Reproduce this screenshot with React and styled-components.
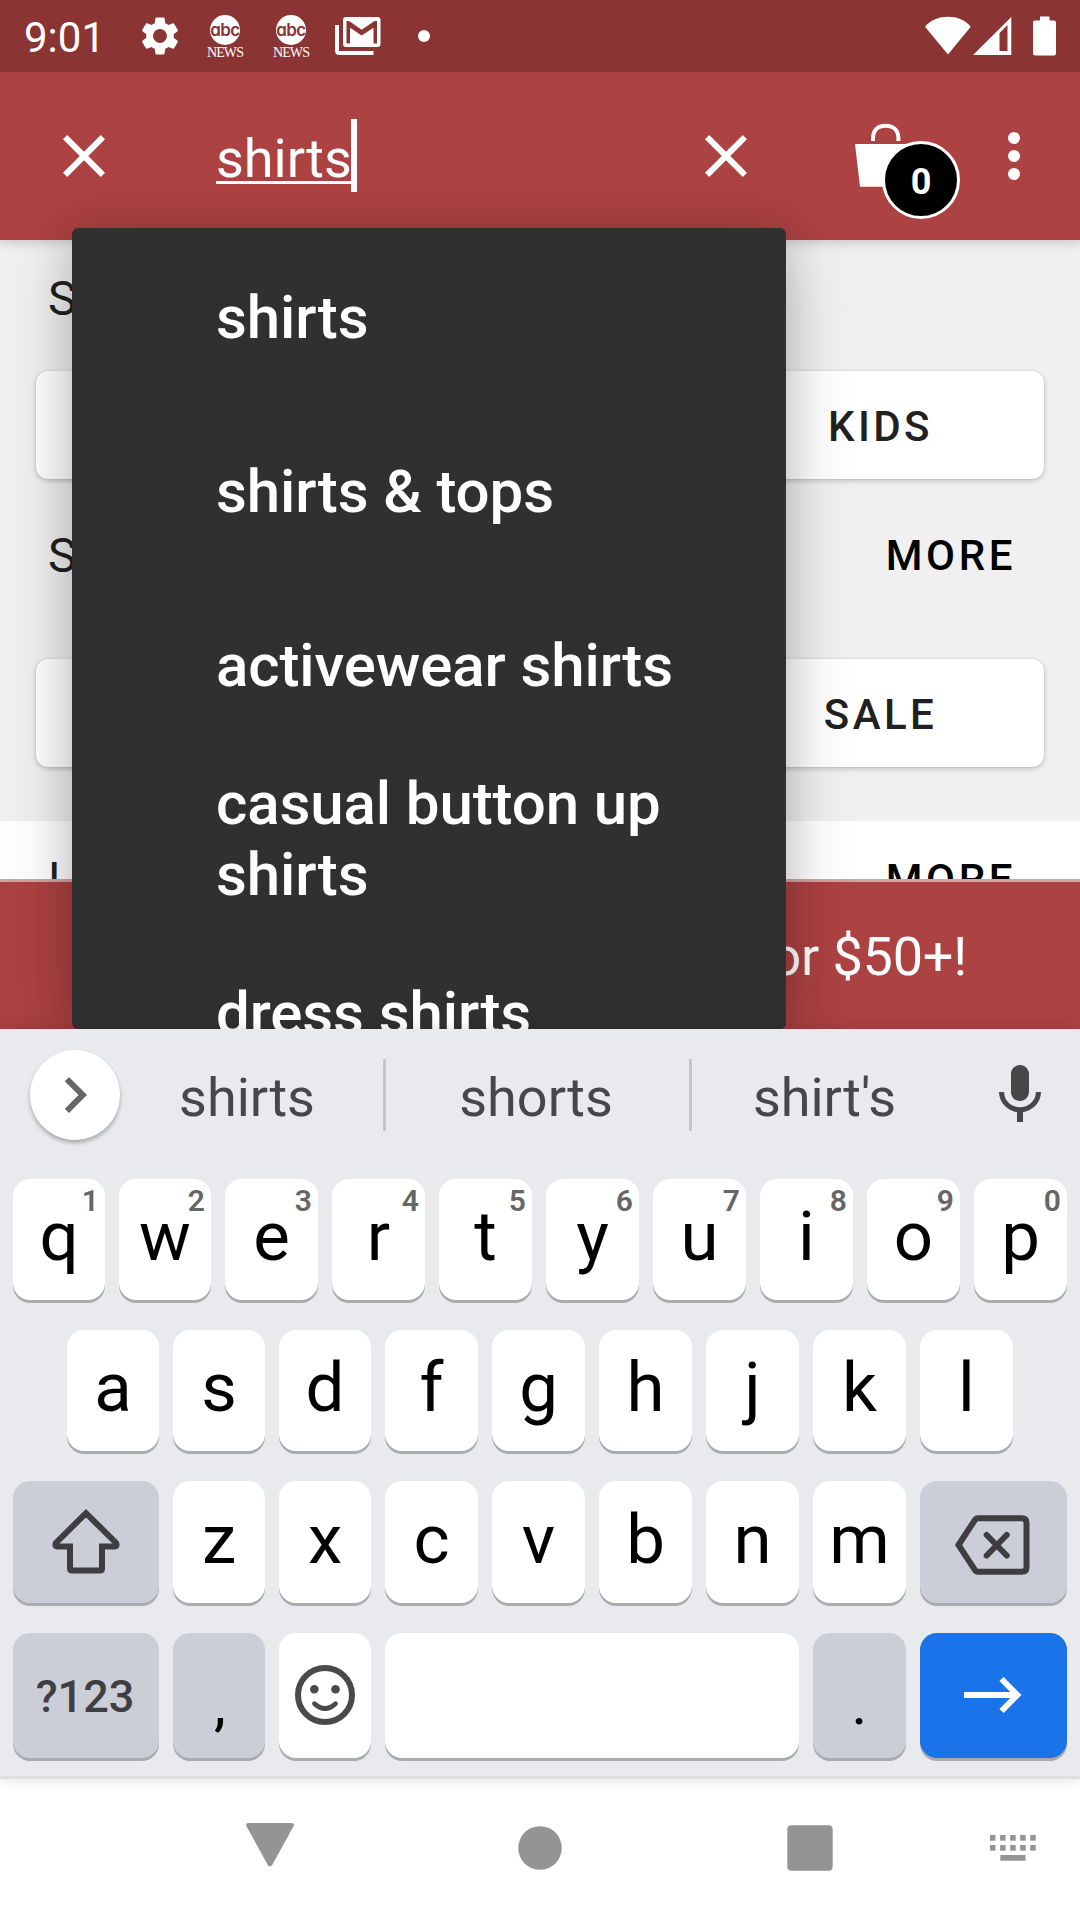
import React from 'react';
import styled, { createGlobalStyle, css } from 'styled-components';
import { MdSettings } from 'react-icons/md';

const GlobalStyle = createGlobalStyle`
  *, *::before, *::after { box-sizing: border-box; }
  body { margin: 0; background: #fff; font-family: Roboto, "Liberation Sans", sans-serif; }
`;

const Screen = styled.main`
  display: flex;
  flex-direction: column;
  width: 1080px;
  height: 1920px;
  overflow: hidden;
`;

/* ---------- status bar ---------- */

const StatusBar = styled.header`
  display: flex;
  align-items: center;
  height: 72px;
  flex: none;
  padding: 0 24px;
  background: #8a3434;
  color: #fff;
`;

const Clock = styled.div`
  width: 103px;
  padding-top: 4px;
  font-size: 42px;
  line-height: 48px;
  white-space: nowrap;
`;

const Slot = styled.div`
  display: flex;
  flex-direction: column;
  align-items: center;
  justify-content: center;
  width: 66px;
  height: 72px;
`;

const NewsBadge = styled(Slot)`
  justify-content: flex-start;
  padding: 15px 2px 0 0;
`;

const NewsDisc = styled.div`
  display: flex;
  align-items: center;
  justify-content: center;
  width: 30px;
  height: 30px;
  border-radius: 50%;
  background: #fff;
  color: #8a3434;
  font: 600 17px/20px Inter, sans-serif;
  letter-spacing: -0.6px;
  font-feature-settings: "cv11";
`;

const NewsWord = styled.div`
  margin-top: 1px;
  font: 14px/14px "Liberation Serif", serif;
  letter-spacing: -0.9px;
`;

const Dot = styled.div`
  width: 12px;
  height: 12px;
  border-radius: 50%;
  background: #fff;
`;

const SystemIcons = styled.div`
  display: flex;
  margin-left: auto;
`;

const WifiSlot = styled.div`
  display: flex;
  margin-right: 2px;
`;

const BatterySlot = styled.div`
  display: flex;
  margin-left: 21px;
`;

/* ---------- app ---------- */

const AppArea = styled.section`
  position: relative;
  display: flex;
  flex-direction: column;
  flex: none;
  height: 957px;
  overflow: hidden;
`;

const AppBar = styled.div`
  position: relative;
  z-index: 1;
  display: flex;
  align-items: center;
  flex: none;
  height: 168px;
  padding: 0 30px 0 48px;
  background: #ad4242;
  color: #fff;
  box-shadow: 0 2px 12px rgba(0, 0, 0, 0.2);
`;

const SearchField = styled.div`
  display: flex;
  align-items: center;
  flex: none;
  width: 474px;
  margin-left: 96px;
`;

const Query = styled.span`
  padding-top: 5px;
  font-size: 54px;
  line-height: 64px;
  text-decoration: underline;
  text-decoration-thickness: 3px;
  text-underline-offset: 4px;
  text-decoration-skip-ink: none;
`;

const Caret = styled.span`
  width: 6px;
  height: 73px;
  margin: 0 0 1px -1px;
  background: #fff;
`;

const Cart = styled.div`
  position: relative;
  width: 105px;
  height: 96px;
  margin-left: 93px;
  padding-top: 12px;
`;

const CartCount = styled.span`
  position: absolute;
  left: 27px;
  top: 33px;
  display: flex;
  align-items: center;
  justify-content: center;
  width: 78px;
  height: 78px;
  padding-top: 3px;
  border: 3px solid #fff;
  border-radius: 50%;
  background: #000;
  font-size: 36px;
  font-weight: 700;
  line-height: 42px;
`;

const Overflow = styled.div`
  margin-left: auto;
  display: flex;
`;

const Content = styled.div`
  flex: none;
  height: 639px;
  overflow: hidden;
  background: #f0f0f0;
`;

const SectionHead = styled.div`
  display: flex;
  align-items: center;
  justify-content: space-between;
  height: 117px;
  padding: 0 64px 0 48px;
  background: ${(p) => (p.$plain ? '#fff' : 'transparent')};
`;

const SectionTitle = styled.div`
  color: #212121;
  font-size: 48px;
  line-height: 56px;
`;

const More = styled.div`
  padding-top: 1px;
  color: #000;
  font-size: 42px;
  font-weight: 500;
  line-height: 48px;
  letter-spacing: 3.6px;
`;

const CardRow = styled.div`
  display: grid;
  grid-template-columns: repeat(3, 1fr);
  gap: 18px;
  padding: 0 36px;
  margin: ${(p) => p.$margin};
`;

const CardButton = styled.div`
  display: flex;
  align-items: center;
  justify-content: center;
  height: 108px;
  padding: 2px 3px 0 0;
  border-radius: 12px;
  background: #fff;
  color: #212121;
  font-size: 42px;
  font-weight: 500;
  letter-spacing: 3.4px;
  box-shadow: 0 2px 5px rgba(0, 0, 0, 0.2), 0 0 2px rgba(0, 0, 0, 0.12);
`;

const Promo = styled.div`
  display: flex;
  align-items: center;
  justify-content: flex-end;
  flex: none;
  height: 150px;
  padding: 1px 113px 0 0;
  border-top: 3px solid #d8a1a1;
  background: #ad4242;
  color: #fff;
  font-size: 54px;
  letter-spacing: -0.2px;
`;

const Popup = styled.ul`
  position: absolute;
  z-index: 2;
  left: 72px;
  top: 156px;
  width: 714px;
  height: 801px;
  margin: 0;
  padding: 2px 0 0;
  list-style: none;
  overflow: hidden;
  border-radius: 6px;
  background: #303030;
  box-shadow: 0 20px 72px rgba(0, 0, 0, 0.2), 0 4px 40px rgba(0, 0, 0, 0.14);
`;

const Suggestion = styled.li`
  display: flex;
  align-items: center;
  height: 174px;
  padding: 0 96px 0 144px;
  color: #fff;
  font-size: 60px;
  font-weight: 500;
  line-height: 71px;
  letter-spacing: -0.1px;
`;

/* ---------- keyboard ---------- */

const Keyboard = styled.section`
  position: relative;
  z-index: 3;
  flex: none;
  height: 750px;
  background: #e8eaed;
  border-bottom: 3px solid #e0e0e0;
  box-shadow: 0 0 14px rgba(0, 0, 0, 0.14);
`;

const WordStrip = styled.div`
  display: flex;
  align-items: center;
  height: 132px;
  margin-bottom: 18px;
  padding: 0 24px 0 30px;
`;

const ExpandButton = styled.div`
  display: flex;
  align-items: center;
  justify-content: center;
  flex: none;
  width: 90px;
  height: 90px;
  border-radius: 50%;
  background: #fff;
  box-shadow: 0 3px 4px rgba(0, 0, 0, 0.28);
`;

const Word = styled.div`
  flex: none;
  width: ${(p) => p.$w}px;
  padding-top: 5px;
  padding-right: ${(p) => p.$trim || 0}px;
  color: #464749;
  font-size: 54px;
  line-height: 64px;
  text-align: center;
  margin-left: ${(p) => p.$gap || 0}px;
`;

const Divider = styled.div`
  width: 3px;
  height: 72px;
  background: #c4c6ca;
`;

const MicSlot = styled.div`
  display: flex;
  margin-left: auto;
`;

const KeyRow = styled.div`
  display: flex;
  gap: 14px;
  height: ${(p) => p.$h}px;
  margin-bottom: ${(p) => p.$after}px;
  padding: 0 ${(p) => p.$inset || 13}px;
`;

const tones = {
  light: css`background: #fff; color: #000;`,
  grey: css`background: #cbced6; color: #000;`,
  blue: css`background: #1a73e8; color: #fff;`,
};

const Key = styled.div`
  position: relative;
  display: flex;
  align-items: center;
  justify-content: center;
  flex: ${(p) => (p.$w ? `0 0 ${p.$w}px` : '1 1 0')};
  min-width: 0;
  padding-bottom: ${(p) => p.$lift ?? 6}px;
  border-radius: 17px;
  box-shadow: 0 3px 0 #a9abae;
  font-size: 69px;
  line-height: 80px;
  ${(p) => tones[p.$tone || 'light']}
`;

const IconKey = styled(Key)`
  padding: ${(p) => p.$pad || '0'};
`;

const ModeKey = styled(Key)`
  padding: 2px 2px 0 0;
  color: #3e3f42;
  font-size: 45px;
  font-weight: 500;
`;

const PunctuationKey = styled(Key)`
  padding: 17px 0 0 ${(p) => p.$nudge || 0}px;
  font-size: 60px;
`;

const Hint = styled.span`
  position: absolute;
  top: 7px;
  right: 6px;
  color: #666;
  font-size: 30px;
  font-weight: 600;
  line-height: 30px;
`;

/* ---------- navigation bar ---------- */

const NavBar = styled.nav`
  display: grid;
  grid-template-columns: 405px 270px 270px 135px;
  flex: none;
  height: 141px;
  background: #fff;
`;

const NavItem = styled.div`
  display: flex;
  align-items: center;
  padding-bottom: ${(p) => p.$lift ?? 3}px;
  padding-left: ${(p) => p.$x}px;
`;

/* ---------- drawings ---------- */

const Close = () => (
  <svg width="72" height="72" viewBox="0 0 24 24" fill="#fff">
    <path d="M19 6.41 17.59 5 12 10.59 6.41 5 5 6.41 10.59 12 5 17.59 6.41 19 12 13.41 17.59 19 19 17.59 13.41 12z" />
  </svg>
);

const MailStack = () => (
  <svg width="46" height="38" viewBox="0 0 46 38">
    <path d="M2 8v25.500q0 2.500 2.500 2.500h34" fill="none" stroke="#fff" strokeWidth="4" />
    <rect x="8" y="0" width="37.500" height="30" rx="3" fill="#fff" />
    <path d="M11.500 26.500V4h2.500l12.700 8.700L39.500 4H42v22.500h-3.500V10.700l-11.800 7.800L15 10.700v15.800z" fill="#8a3434" />
  </svg>
);

const Wifi = () => (
  <svg width="46" height="40" viewBox="0 0 46 40" fill="#fff">
    <path d="M0 10.700C6 4 14 .8 23 .8s17 3.200 22.700 9.900L23 38.500z" />
  </svg>
);

const Signal = () => (
  <svg width="39" height="40" viewBox="0 0 39 40" fill="#fff">
    <path fillRule="evenodd" d="M0 39 38.300 1v38zM26.500 17v18H34.500V9z" />
  </svg>
);

const Battery = () => (
  <svg width="23" height="40" viewBox="0 0 23 40" fill="#fff">
    <path d="M7 .500h9.500v4H21q2 0 2 2V37.500q0 2-2 2H2q-2 0-2-2V6.500q0-2 2-2h5z" />
  </svg>
);

const Bag = () => (
  <svg width="62" height="72" viewBox="0 0 62 72">
    <path d="M0 24h62l-4.800 42.700H5z" fill="#fff" />
    <path d="M18 21v-2.500C18 10 23 5.800 30.600 5.800S43.400 10 43.400 18.500V21" fill="none" stroke="#fff" strokeWidth="4" />
  </svg>
);

const Dots = () => (
  <svg width="72" height="72" viewBox="0 0 24 24" fill="#fff">
    <circle cx="12" cy="6" r="2" />
    <circle cx="12" cy="12" r="2" />
    <circle cx="12" cy="18" r="2" />
  </svg>
);

const Chevron = () => (
  <svg width="72" height="72" viewBox="0 0 24 24" fill="#666">
    <path d="M10 6 8.590 7.410 13.170 12l-4.580 4.590L10 18l6-6z" />
  </svg>
);

const Mic = () => (
  <svg width="72" height="72" viewBox="0 0 24 24" fill="#464749">
    <path d="M12 14c1.660 0 2.990-1.340 2.990-3L15 5c0-1.660-1.340-3-3-3S9 3.340 9 5v6c0 1.660 1.340 3 3 3zm5.300-3c0 3-2.540 5.100-5.300 5.100S6.700 14 6.700 11H5c0 3.410 2.720 6.230 6 6.720V21h2v-3.280c3.280-.48 6-3.300 6-6.720h-1.700z" />
  </svg>
);

const Shift = () => (
  <svg width="68" height="72" viewBox="0 0 68 72" fill="none" stroke="#3e3e40" strokeWidth="6">
    <path d="M34 7.200 3.900 36.900q-1.500 3.500 1.600 3.500H18v22.100q0 2 2 2h28q2 0 2-2V40.400h12.500q3.100 0 1.600-3.500z" />
  </svg>
);

const Backspace = () => (
  <svg width="78" height="60" viewBox="0 0 78 60" fill="none" stroke="#3e3e40" strokeWidth="6">
    <path d="M4.500 30 21 4.800Q22 3.200 24 3.200h44q4.500 0 4.500 4.500v44.500q0 4.500-4.500 4.500H24q-2 0-3-1.600z" />
    <path d="m32.700 20 20 20.500m0-20.500-20 20.500" strokeLinecap="round" />
  </svg>
);

const Smile = () => (
  <svg width="60" height="60" viewBox="0 0 60 60">
    <circle cx="30" cy="30" r="27" fill="none" stroke="#4a4a4a" strokeWidth="6" />
    <circle cx="19.300" cy="24.300" r="4.300" fill="#4a4a4a" />
    <circle cx="40.500" cy="24.300" r="4.300" fill="#4a4a4a" />
    <path d="M19.500 38.700q10.500 9.600 21 0" fill="none" stroke="#4a4a4a" strokeWidth="4.800" strokeLinecap="round" />
  </svg>
);

const Go = () => (
  <svg width="58" height="40" viewBox="0 0 58 40" fill="none" stroke="#fff" strokeWidth="6">
    <path d="M0 20h53M37.500 4 53.300 20 37.500 36" />
  </svg>
);

const keyboardDots = [0, 10.1, 20.2, 30.2, 40.2];

/* The leading keys of each row are a pixel narrower than the rest. */
const keyWidth = (index, narrow) => (index < narrow ? 92 : 93);

export default function App() {
  return (
    <>
      <GlobalStyle />
      <Screen>
        <StatusBar>
          <Clock>9:01</Clock>
          <Slot><MdSettings size={46} /></Slot>
          <NewsBadge><NewsDisc>abc</NewsDisc><NewsWord>NEWS</NewsWord></NewsBadge>
          <NewsBadge><NewsDisc>abc</NewsDisc><NewsWord>NEWS</NewsWord></NewsBadge>
          <Slot><MailStack /></Slot>
          <Slot><Dot /></Slot>
          <SystemIcons>
            <WifiSlot><Wifi /></WifiSlot>
            <Signal />
            <BatterySlot><Battery /></BatterySlot>
          </SystemIcons>
        </StatusBar>

        <AppArea>
          <AppBar>
            <Close />
            <SearchField><Query>shirts</Query><Caret /></SearchField>
            <Close />
            <Cart><Bag /><CartCount>0</CartCount></Cart>
            <Overflow><Dots /></Overflow>
          </AppBar>

          <Content>
            <SectionHead><SectionTitle>S</SectionTitle></SectionHead>
            <CardRow $margin="14px 0 18px">
              <CardButton /><CardButton /><CardButton>KIDS</CardButton>
            </CardRow>
            <SectionHead><SectionTitle>S</SectionTitle><More>MORE</More></SectionHead>
            <CardRow $margin="45px 0 54px">
              <CardButton /><CardButton /><CardButton>SALE</CardButton>
            </CardRow>
            <SectionHead $plain><SectionTitle>L</SectionTitle><More>MORE</More></SectionHead>
          </Content>
          <Promo>for $50+!</Promo>

          <Popup>
            <Suggestion>shirts</Suggestion>
            <Suggestion>shirts &amp; tops</Suggestion>
            <Suggestion>activewear shirts</Suggestion>
            <Suggestion>casual button up shirts</Suggestion>
            <Suggestion>dress shirts</Suggestion>
          </Popup>
        </AppArea>

        <Keyboard>
          <WordStrip>
            <ExpandButton><Chevron /></ExpandButton>
            <Word $w={272} $gap={-9}>shirts</Word>
            <Divider />
            <Word $w={303} $trim={3}>shorts</Word>
            <Divider />
            <Word $w={265}>shirt's</Word>
            <MicSlot><Mic /></MicSlot>
          </WordStrip>
          <KeyRow $h={121} $after={30}>
            {[...'qwertyuiop'].map((k, i) => (
              <Key key={k} $w={keyWidth(i, 2)}>{k}<Hint>{(i + 1) % 10}</Hint></Key>
            ))}
          </KeyRow>
          <KeyRow $h={121} $after={30} $inset={67}>
            {[...'asdfghjkl'].map((k, i) => <Key key={k} $w={keyWidth(i, 3)}>{k}</Key>)}
          </KeyRow>
          <KeyRow $h={122} $after={30}>
            <IconKey $tone="grey" $w={146}><Shift /></IconKey>
            {[...'zxcvbnm'].map((k, i) => <Key key={k} $w={keyWidth(i, 2)} $lift={4}>{k}</Key>)}
            <IconKey $tone="grey" $w={147} $pad="6px 1px 0 0"><Backspace /></IconKey>
          </KeyRow>
          <KeyRow $h={125} $after={0}>
            <ModeKey $tone="grey" $w={146}>?123</ModeKey>
            <PunctuationKey $tone="grey" $w={92} $nudge={2}>,</PunctuationKey>
            <IconKey $w={92} $pad="0 0 1px"><Smile /></IconKey>
            <Key />
            <PunctuationKey $tone="grey" $w={93}>.</PunctuationKey>
            <IconKey $tone="blue" $w={147} $pad="0 2px 1px 0"><Go /></IconKey>
          </KeyRow>
        </Keyboard>

        <NavBar>
          <NavItem $x={246} $lift={10}>
            <svg width="48" height="44" viewBox="0 0 48 44" fill="#949494">
              <path d="M2.500 0h43q3.500 0 2 3.200L26.500 41.500q-2.500 4-5 0L.500 3.200Q-1 0 2.500 0z" />
            </svg>
          </NavItem>
          <NavItem $x={113}>
            <svg width="44" height="44" viewBox="0 0 44 44" fill="#949494">
              <circle cx="22" cy="22" r="21.800" />
            </svg>
          </NavItem>
          <NavItem $x={112}>
            <svg width="46" height="46" viewBox="0 0 46 46" fill="#949494">
              <rect x=".300" y=".200" width="45.400" height="45.600" rx="4" />
            </svg>
          </NavItem>
          <NavItem $x={45}>
            <svg width="46" height="26" viewBox="0 0 46 26" fill="#949494">
              {keyboardDots.map((x) => (
                <React.Fragment key={x}>
                  <rect x={x} y="0" width="5.500" height="5.700" />
                  <rect x={x} y="10" width="5.500" height="5.700" />
                </React.Fragment>
              ))}
              <rect x="10.300" y="20" width="25.200" height="5.700" />
            </svg>
          </NavItem>
        </NavBar>
      </Screen>
    </>
  );
}
